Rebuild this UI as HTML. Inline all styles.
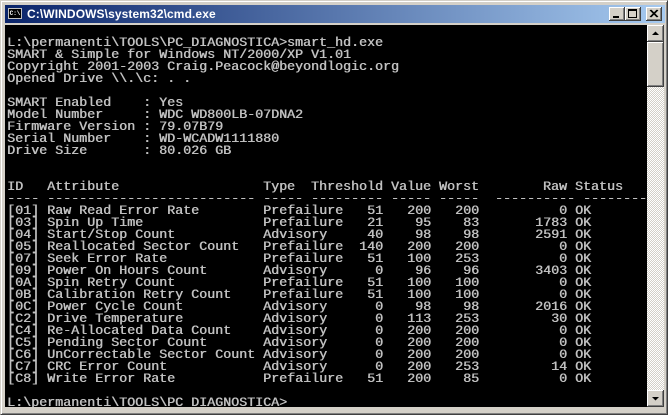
<!DOCTYPE html>
<html><head><meta charset="utf-8"><style>
html,body{margin:0;padding:0;width:668px;height:415px;overflow:hidden;background:#d4d0c8}
.win{position:absolute;left:0;top:0;width:666px;height:413px;border-top:1px solid #d4d0c8;border-left:1px solid #d4d0c8;border-right:1px solid #404040;border-bottom:1px solid #404040;box-shadow:inset 1px 1px 0 #fff,inset -1px -1px 0 #808080}
.title{position:absolute;left:4px;top:4px;width:660px;height:18px;background:linear-gradient(to right,#0a246a,#a6caf0)}
.title .txt{position:absolute;left:22px;top:2px;font:bold 12px "Liberation Sans",sans-serif;color:#fff;letter-spacing:0.1px}
.icon{position:absolute;left:3px;top:3px;width:14px;height:11px;background:#000;border:1px solid #c0c0c0;box-sizing:border-box;font:bold 6px "Liberation Mono",monospace;color:#fff;line-height:9px;text-align:center}
.btn{position:absolute;top:2px;width:16px;height:14px;background:#d4d0c8;box-shadow:inset -1px -1px 0 #404040,inset 1px 1px 0 #fff,inset -2px -2px 0 #808080}
.content{position:absolute;left:4px;top:24px;width:642px;height:382px;background:#000;overflow:hidden}
pre,.r{margin:0;font-family:"Liberation Mono",monospace;font-size:13.33px;line-height:12px;color:#c0c0c0;white-space:pre;text-shadow:0.5px 0 0 #c0c0c0}
pre{position:absolute;left:2px;top:13px}
.r span{display:inline-block;vertical-align:top}
.a{width:40px}.b{width:216px}.c{width:80px}.t{width:40px;text-align:right}.v,.w{width:48px;text-align:right}.x{width:88px;text-align:right}.s{padding-left:8px}
.sb{position:absolute;left:646px;top:24px;width:17px;height:382px;background-color:#f4f3f0;background-image:repeating-conic-gradient(#d4d0c8 0 25%,#fff 0 50%);background-size:2px 2px}
.sbtn{position:absolute;left:0;width:17px;background:#d4d0c8;box-shadow:inset -1px -1px 0 #404040,inset 1px 1px 0 #fff,inset -2px -2px 0 #808080}
</style></head><body>
<div class="win">
<div class="title"><div class="icon">C:\</div><div class="txt">C:\WINDOWS\system32\cmd.exe</div>
<div class="btn" style="left:604px"><div style="position:absolute;left:4px;top:9px;width:6px;height:2px;background:#000"></div></div>
<div class="btn" style="left:620px"><div style="position:absolute;left:3px;top:2px;width:7px;height:6px;border:1px solid #000;border-top-width:2px"></div></div>
<div class="btn" style="left:641px"><svg width="16" height="14" style="position:absolute;left:0;top:0"><path d="M4 3L11 10M5 3L12 10M11 3L4 10M12 3L5 10" stroke="#000" stroke-width="1"/></svg></div>
</div>
<div class="content">
<pre>L:\permanenti\TOOLS\PC_DIAGNOSTICA&gt;smart_hd.exe
SMART &amp; Simple for Windows NT/2000/XP V1.01
Copyright 2001-2003 Craig.Peacock@beyondlogic.org
Opened Drive \\.\c: . .

SMART Enabled    : Yes
Model Number     : WDC WD800LB-07DNA2
Firmware Version : 79.07B79
Serial Number    : WD-WCADW1111880
Drive Size       : 80.026 GB


ID   Attribute                  Type  Threshold Value Worst        Raw Status
---- -------------------------- ----- --------- ----- -----  ---------- --------
<div class="r"><span class="a">[01]</span><span class="b">Raw Read Error Rate</span><span class="c">Prefailure</span><span class="t">51</span><span class="v">200</span><span class="w">200</span><span class="x">0</span><span class="s">OK</span></div><div class="r"><span class="a">[03]</span><span class="b">Spin Up Time</span><span class="c">Prefailure</span><span class="t">21</span><span class="v">95</span><span class="w">83</span><span class="x">1783</span><span class="s">OK</span></div><div class="r"><span class="a">[04]</span><span class="b">Start/Stop Count</span><span class="c">Advisory</span><span class="t">40</span><span class="v">98</span><span class="w">98</span><span class="x">2591</span><span class="s">OK</span></div><div class="r"><span class="a">[05]</span><span class="b">Reallocated Sector Count</span><span class="c">Prefailure</span><span class="t">140</span><span class="v">200</span><span class="w">200</span><span class="x">0</span><span class="s">OK</span></div><div class="r"><span class="a">[07]</span><span class="b">Seek Error Rate</span><span class="c">Prefailure</span><span class="t">51</span><span class="v">100</span><span class="w">253</span><span class="x">0</span><span class="s">OK</span></div><div class="r"><span class="a">[09]</span><span class="b">Power On Hours Count</span><span class="c">Advisory</span><span class="t">0</span><span class="v">96</span><span class="w">96</span><span class="x">3403</span><span class="s">OK</span></div><div class="r"><span class="a">[0A]</span><span class="b">Spin Retry Count</span><span class="c">Prefailure</span><span class="t">51</span><span class="v">100</span><span class="w">100</span><span class="x">0</span><span class="s">OK</span></div><div class="r"><span class="a">[0B]</span><span class="b">Calibration Retry Count</span><span class="c">Prefailure</span><span class="t">51</span><span class="v">100</span><span class="w">100</span><span class="x">0</span><span class="s">OK</span></div><div class="r"><span class="a">[0C]</span><span class="b">Power Cycle Count</span><span class="c">Advisory</span><span class="t">0</span><span class="v">98</span><span class="w">98</span><span class="x">2016</span><span class="s">OK</span></div><div class="r"><span class="a">[C2]</span><span class="b">Drive Temperature</span><span class="c">Advisory</span><span class="t">0</span><span class="v">113</span><span class="w">253</span><span class="x">30</span><span class="s">OK</span></div><div class="r"><span class="a">[C4]</span><span class="b">Re-Allocated Data Count</span><span class="c">Advisory</span><span class="t">0</span><span class="v">200</span><span class="w">200</span><span class="x">0</span><span class="s">OK</span></div><div class="r"><span class="a">[C5]</span><span class="b">Pending Sector Count</span><span class="c">Advisory</span><span class="t">0</span><span class="v">200</span><span class="w">200</span><span class="x">0</span><span class="s">OK</span></div><div class="r"><span class="a">[C6]</span><span class="b">UnCorrectable Sector Count</span><span class="c">Advisory</span><span class="t">0</span><span class="v">200</span><span class="w">200</span><span class="x">0</span><span class="s">OK</span></div><div class="r"><span class="a">[C7]</span><span class="b">CRC Error Count</span><span class="c">Advisory</span><span class="t">0</span><span class="v">200</span><span class="w">253</span><span class="x">14</span><span class="s">OK</span></div><div class="r"><span class="a">[C8]</span><span class="b">Write Error Rate</span><span class="c">Prefailure</span><span class="t">51</span><span class="v">200</span><span class="w">85</span><span class="x">0</span><span class="s">OK</span></div>
L:\permanenti\TOOLS\PC_DIAGNOSTICA&gt;</pre>
</div>
<div class="sb">
<div class="sbtn" style="top:0;height:17px"><svg width="17" height="17" style="position:absolute;left:0;top:0"><path d="M5 10H12L8.5 6.5Z" fill="#000"/></svg></div>
<div class="sbtn" style="top:17px;height:45px"></div>
<div class="sbtn" style="top:365px;height:17px"><svg width="17" height="17" style="position:absolute;left:0;top:0"><path d="M5 7H12L8.5 10.5Z" fill="#000"/></svg></div>
</div>
</div>
</body></html>
